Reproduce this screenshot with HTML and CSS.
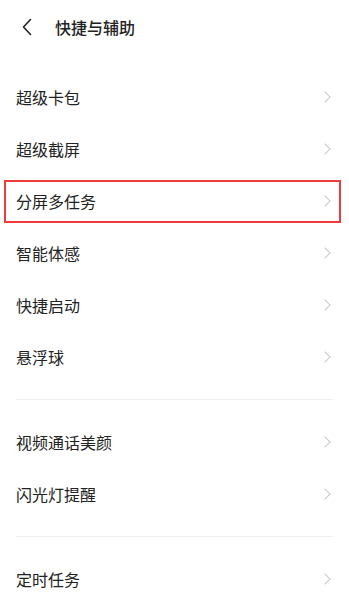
FILE: index.html
```html
<!DOCTYPE html>
<html>
<head>
    <title>快捷与辅助</title>
    <link rel="stylesheet" href="styles.css">
</head>
<body>
    <div class="page">
        <div class="header">
            <svg class="back" width="12" height="18" viewBox="0 0 12 18">
                <path d="M9.5 1.5 L2.5 9 L9.5 16.5" fill="none" stroke="#222" stroke-width="1.6" stroke-linecap="round" stroke-linejoin="round"/>
            </svg>
            <span class="title">快捷与辅助</span>
        </div>

        <div class="group">
            <div class="row"><span>超级卡包</span><i class="chev"></i></div>
            <div class="row"><span>超级截屏</span><i class="chev"></i></div>
            <div class="row marked"><span>分屏多任务</span><i class="chev"></i></div>
            <div class="row"><span>智能体感</span><i class="chev"></i></div>
            <div class="row"><span>快捷启动</span><i class="chev"></i></div>
            <div class="row"><span>悬浮球</span><i class="chev"></i></div>
        </div>

        <div class="divider"></div>

        <div class="group">
            <div class="row"><span>视频通话美颜</span><i class="chev"></i></div>
            <div class="row"><span>闪光灯提醒</span><i class="chev"></i></div>
        </div>

        <div class="divider"></div>

        <div class="group">
            <div class="row"><span>定时任务</span><i class="chev"></i></div>
        </div>
    </div>
</body>
</html>
```

FILE: styles.css
```css
body {
    margin: 0;
    padding: 0;
    background-color: #fff;
    font-family: "Noto Sans CJK SC", "Noto Sans", sans-serif;
    color: #222;
    overflow: hidden;
}

.page {
    width: 349px;
}

.header {
    display: flex;
    align-items: center;
    height: 54px;
    padding-left: 21px;
}

.back {
    display: block;
    margin-right: 22px;
}

.title {
    font-size: 16px;
    font-weight: 500;
    line-height: 1;
}

.group {
    padding-top: 17px;
}

.divider + .group {
    padding-top: 16px;
}

.row {
    position: relative;
    display: flex;
    align-items: center;
    justify-content: space-between;
    height: 52px;
    padding: 0 16px;
    font-size: 16px;
}

.chev {
    width: 7px;
    height: 7px;
    margin-right: 4px;
    border-top: 1.3px solid #c9c9c9;
    border-right: 1.3px solid #c9c9c9;
    transform: rotate(45deg);
}

.row.marked::after {
    content: "";
    position: absolute;
    top: 5px;
    left: 4px;
    right: 8px;
    bottom: 4px;
    border: 2px solid #ef3b3b;
}

.divider {
    height: 1px;
    margin: 16px 16px 0 16px;
    background-color: #f0f0f0;
}
```
